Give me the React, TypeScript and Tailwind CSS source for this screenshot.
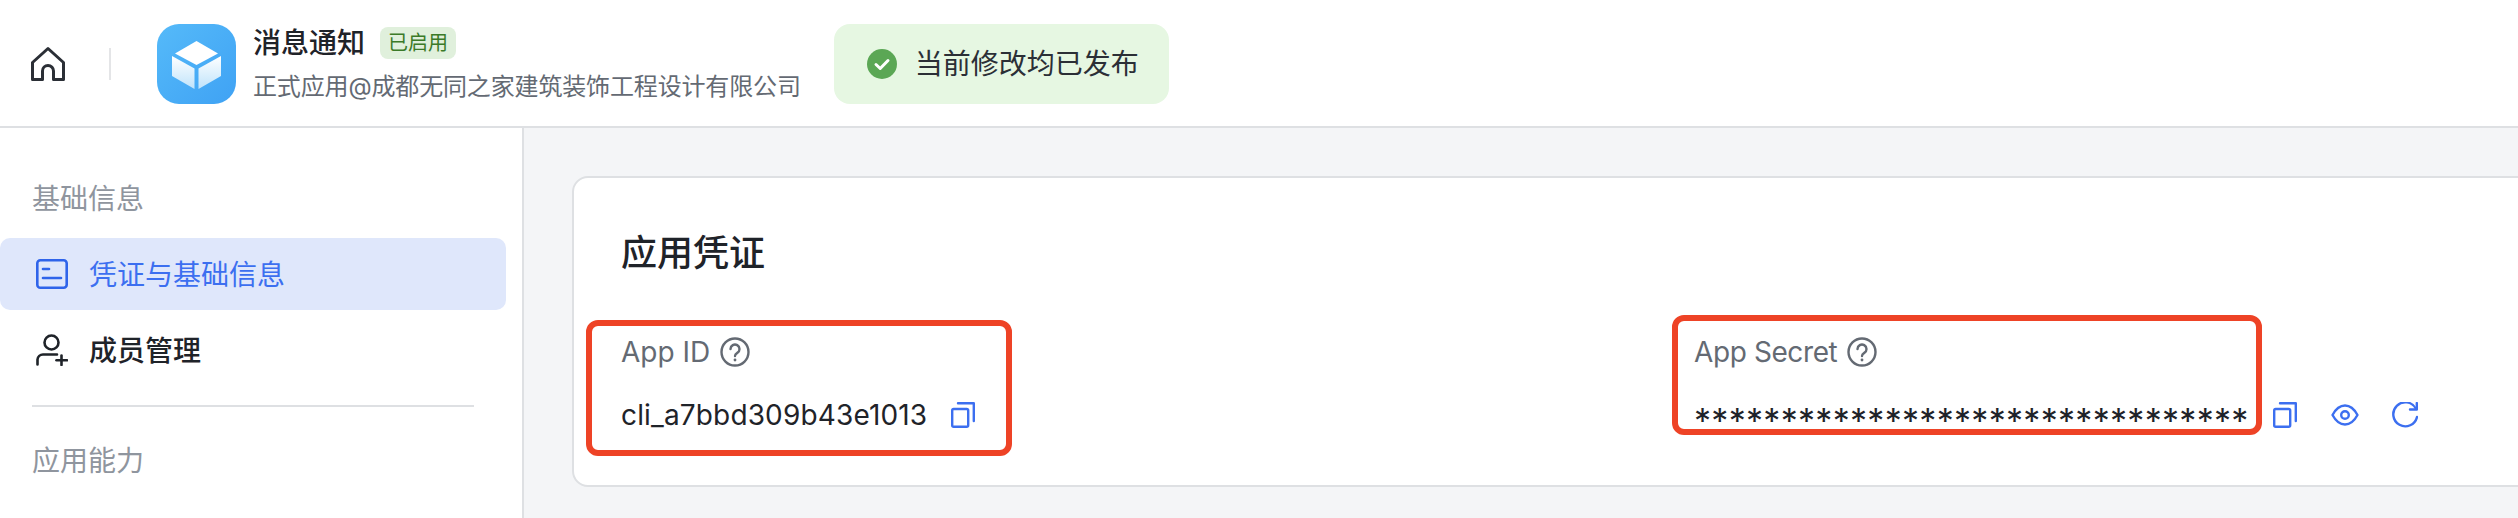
const fontStack = "font-['Inter','Noto_Sans_CJK_SC',sans-serif]";

function HomeIcon() {
  return (
    <svg width="36" height="36" viewBox="0 0 36 36" fill="none" stroke="#2b2f36" strokeWidth="3" strokeLinejoin="round" strokeLinecap="round">
      <path d="M18 2.5 L33.5 16.5 V33.5 H23.5 V25 a5.5 5.5 0 0 0 -11 0 V33.5 H2.5 V16.5 Z" />
    </svg>
  );
}

function AppLogo() {
  return (
    <svg width="80" height="80" viewBox="0 0 80 80">
      <defs>
        <linearGradient id="bg" x1="0" y1="0" x2="1" y2="1">
          <stop offset="0" stopColor="#55baf9" />
          <stop offset="1" stopColor="#3fa2f4" />
        </linearGradient>
        <linearGradient id="side" x1="0" y1="0" x2="0" y2="1">
          <stop offset="0" stopColor="#ffffff" />
          <stop offset="1" stopColor="#bfe3fb" />
        </linearGradient>
      </defs>
      <rect x="0" y="0" width="79" height="80" rx="22" fill="url(#bg)" />
      <path d="M39.5 17 L61 29.5 L39.5 41 L18 29.5 Z" fill="#ffffff" />
      <path d="M15 32 L37.5 44.5 V65 L15 52 Z" fill="url(#side)" />
      <path d="M64 32 L41.5 44.5 V65 L64 52 Z" fill="url(#side)" />
    </svg>
  );
}

function CheckCircle() {
  return (
    <svg width="30" height="30" viewBox="0 0 30 30">
      <circle cx="15" cy="15" r="15" fill="#5ba755" />
      <path d="M9 15.5 L13.2 19.5 L21 11.5" fill="none" stroke="#ffffff" strokeWidth="3" strokeLinecap="round" strokeLinejoin="round" />
    </svg>
  );
}

function CredentialIcon() {
  return (
    <svg width="32" height="30" viewBox="0 0 32 30" fill="none" stroke="#2f64ea" strokeWidth="2.6" strokeLinecap="round" strokeLinejoin="round">
      <rect x="1.3" y="1.3" width="29.400" height="27.400" rx="3" />
      <path d="M7 10 H13" />
      <path d="M7 19 H25" />
    </svg>
  );
}

function MemberIcon() {
  return (
    <svg width="32" height="32" viewBox="0 0 32 32" fill="none" stroke="#1f2329" strokeWidth="2.6" strokeLinecap="round" strokeLinejoin="round">
      <circle cx="15.500" cy="8.500" r="7" />
      <path d="M1.500 30.500 V25.500 a5.500 5.500 0 0 1 5.500 -5 H21" />
      <path d="M25.500 21.500 V31" />
      <path d="M20.500 26.300 H31" />
    </svg>
  );
}

function HelpIcon() {
  return (
    <svg width="30" height="30" viewBox="0 0 30 30" fill="none" stroke="#646a73" strokeWidth="2.4" strokeLinecap="round" strokeLinejoin="round">
      <circle cx="15" cy="15" r="13.500" />
      <path d="M10.500 12 a4.500 4.500 0 1 1 6.800 3.900 c-1.500 0.900 -2.300 1.600 -2.300 3.100" />
      <path d="M15 22.800 V23" strokeWidth="2.800" />
    </svg>
  );
}

function CopyIcon() {
  return (
    <svg width="24" height="26" viewBox="0 0 24 26" fill="none" stroke="#3c6ff0" strokeWidth="2.400" strokeLinecap="round" strokeLinejoin="round">
      <rect x="1.200" y="7" width="16" height="17.800" rx="1.500" />
      <path d="M7 1.200 H22.800 V19" />
    </svg>
  );
}

function EyeIcon() {
  return (
    <svg width="28" height="22" viewBox="0 0 28 22" fill="none" stroke="#3c6ff0" strokeWidth="2.400" strokeLinejoin="round">
      <path d="M1.500 11 C5 4.500 9.500 1.500 14 1.500 S23 4.500 26.500 11 C23 17.500 18.500 20.500 14 20.500 S5 17.500 1.500 11 Z" />
      <circle cx="14" cy="11" r="3.800" />
    </svg>
  );
}

function RefreshIcon() {
  return (
    <svg width="26" height="26" viewBox="0 0 26 26" fill="none" stroke="#3c6ff0" strokeWidth="2.400" strokeLinecap="round" strokeLinejoin="round">
      <path d="M23.800 6.500 A12 12 0 1 0 25 15" />
      <path d="M24.800 1 V7.500 H18" />
    </svg>
  );
}

export default function App() {
  return (
    <div className={`flex h-[518px] w-[2518px] flex-col overflow-hidden bg-[#f4f5f7] text-[#1f2329] ${fontStack}`}>
      {/* Header */}
      <header className="flex h-[128px] shrink-0 items-center border-b-2 border-[#dee0e3] bg-white pt-[2px]">
        <div className="ml-[30px] flex w-[36px] justify-center">
          <HomeIcon />
        </div>
        <div className="ml-[43px] h-[32px] w-[2px] bg-[#e4e5e7]" />
        <div className="ml-[46px]">
          <AppLogo />
        </div>
        <div className="ml-[16px] flex flex-col">
          <div className="flex items-center">
            <span className="text-[28px] leading-[36px] font-medium">消息通知</span>
            <span className="ml-[15px] rounded-[8px] bg-[#e0f0dc] px-[8px] text-[20px] leading-[32px] text-[#3b7a28]">已启用</span>
          </div>
          <div className="mt-[10px] text-[24px] leading-[32px] tracking-[-0.15px] text-[#646a73]">正式应用@成都无同之家建筑装饰工程设计有限公司</div>
        </div>
        <div className="ml-[33px] flex h-[80px] w-[335px] items-center rounded-[16px] bg-[#e6f7e2] pl-[33px]">
          <CheckCircle />
          <span className="ml-[18px] text-[28px] leading-[36px] text-[#2b2f36]">当前修改均已发布</span>
        </div>
      </header>

      <div className="flex min-h-0 flex-1">
        {/* Sidebar */}
        <aside className="w-[524px] shrink-0 border-r-2 border-[#dee0e3] bg-white">
          <div className="mt-[52px] pt-[2px] pl-[32px] text-[28px] leading-[34px] text-[#8f959e]">基础信息</div>
          <div className="mt-[22px] flex h-[72px] w-[506px] items-center rounded-[10px] bg-[#dfe7fb] pl-[36px] text-[#3c6ff0]">
            <CredentialIcon />
            <span className="ml-[21px] pt-[2px] text-[28px] leading-[36px]">凭证与基础信息</span>
          </div>
          <div className="mt-[4px] flex h-[72px] items-center pl-[36px]">
            <MemberIcon />
            <span className="ml-[21px] pt-[2px] text-[28px] leading-[36px] font-medium">成员管理</span>
          </div>
          <div className="mt-[19px] ml-[32px] h-[2px] w-[442px] bg-[#dee0e3]" />
          <div className="mt-[35px] pt-[2px] pl-[32px] text-[28px] leading-[34px] text-[#8f959e]">应用能力</div>
        </aside>

        {/* Main */}
        <main className="min-w-0 flex-1 overflow-hidden pt-[48px] pl-[48px]">
          <section className="relative h-[311px] w-[2100px] rounded-[16px] border-2 border-[#dee0e3] bg-white pt-[53px] pl-[47px]">
            <h2 className="text-[36px] leading-[44px] font-medium">应用凭证</h2>
            <div className="mt-[59px] grid grid-cols-[1073px_1fr]">
              <div>
                <div className="flex items-center">
                  <span className="text-[28px] leading-[36px] text-[#646a73]">App ID</span>
                  <span className="ml-[10px] flex"><HelpIcon /></span>
                </div>
                <div className="mt-[27px] flex items-center">
                  <span className="text-[28px] leading-[36px] tracking-[0.15px]">cli_a7bbd309b43e1013</span>
                  <span className="ml-[24px] flex"><CopyIcon /></span>
                </div>
              </div>
              <div>
                <div className="flex items-center">
                  <span className="text-[28px] leading-[36px] tracking-[-0.4px] text-[#646a73]">App Secret</span>
                  <span className="ml-[10px] flex"><HelpIcon /></span>
                </div>
                <div className="mt-[27px] flex items-center">
                  <span className="h-[36px] pt-[6px] text-[34px] leading-[36px] tracking-[0.3px]">********************************</span>
                  <span className="ml-[24px] flex"><CopyIcon /></span>
                  <span className="ml-[34px] flex"><EyeIcon /></span>
                  <span className="ml-[33px] flex"><RefreshIcon /></span>
                </div>
              </div>
            </div>

            {/* red annotation boxes drawn over the screenshot */}
            <div className="absolute top-[142px] left-[12px] h-[136px] w-[426px] rounded-[12px] border-[6px] border-[#ee4326]" />
            <div className="absolute top-[137px] left-[1098px] h-[120px] w-[590px] rounded-[12px] border-[6px] border-[#ee4326]" />
          </section>
        </main>
      </div>
    </div>
  );
}
